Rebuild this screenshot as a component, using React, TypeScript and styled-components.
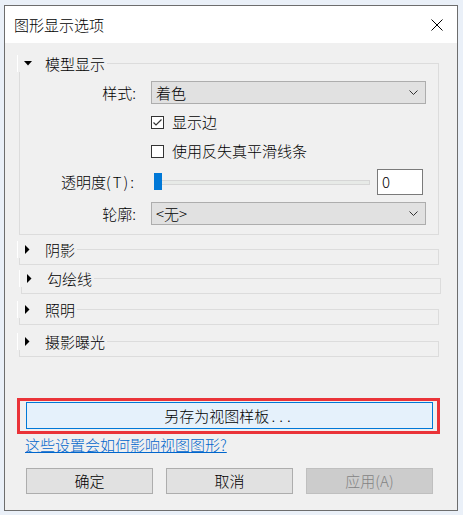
import React from "react";
import styled, { createGlobalStyle } from "styled-components";

const GlobalStyle = createGlobalStyle`
    html, body {
        margin: 0;
        padding: 0;
        background: #eaf0f8;
    }
    body {
        font-family: "Noto Sans CJK SC", "Liberation Sans", sans-serif;
        font-size: 15px;
        font-weight: 300;
        color: #000;
    }
    * {
        box-sizing: border-box;
    }
`;

const Dialog = styled.div`
    margin: 5px 0 0 4px;
    width: 454px;
    height: 506px;
    border: 1px solid #6d6d6d;
    background: #f0f0f0;
    display: flex;
    flex-direction: column;
`;

const TitleBar = styled.div`
    height: 37px;
    flex: none;
    background: #fff;
    display: flex;
    align-items: center;
    justify-content: space-between;
    padding: 0 14px 0 9px;
    font-size: 15px;
    line-height: 18px;
`;

const Content = styled.div`
    flex: 1;
    display: flex;
    flex-direction: column;
    padding: 12px 17px 0 12px;
`;

const Group = styled.fieldset<{ $gap?: number; $shift?: number }>`
    margin: ${(p) => p.$gap ?? 0}px ${(p) => 1 - (p.$shift ?? 0)}px 0
        ${(p) => 2 + (p.$shift ?? 0)}px;
    padding: 0;
    min-width: 0;
    border: 1px solid #dcdcdc;
`;

const Legend = styled.legend`
    margin-left: -3px;
    padding: 0 2px 0 5px;
    height: 17px;
    display: flex;
    align-items: center;
    border-left: 1px solid #fff;
    font-size: 15px;
    line-height: 17px;
`;

const Arrow = styled.span`
    width: 9px;
    display: flex;
    justify-content: center;
    margin-right: 13px;
`;

const GroupBody = styled.div<{ $open?: boolean }>`
    padding: ${(p) => (p.$open ? "9px 12px 9px 0" : "6px 0 0 0")};
`;

const Form = styled.div`
    display: grid;
    grid-template-columns: 116px 1fr;
    grid-template-rows: 23px 22px 22px 26px 23px;
    column-gap: 15px;
    row-gap: 7px;
    align-items: center;
`;

const Label = styled.span`
    text-align: right;
    font-size: 15px;
    line-height: 18px;
`;

const Wide = styled.span`
    letter-spacing: 2px;
`;

const Select = styled.div`
    height: 23px;
    border: 1px solid #adadad;
    background: #e1e1e1;
    display: flex;
    align-items: center;
    justify-content: space-between;
    padding: 0 7px 0 4px;
    font-size: 15px;
    line-height: 18px;
`;

const CheckRow = styled.label`
    grid-column: 2;
    display: flex;
    align-items: center;
    gap: 8px;
    font-size: 15px;
    line-height: 18px;
`;

const Box = styled.span`
    width: 13px;
    height: 13px;
    border: 1px solid #333;
    background: #fff;
    display: flex;
    align-items: center;
    justify-content: center;
`;

const SliderRow = styled.div`
    display: flex;
    align-items: center;
    gap: 7px;
    padding-right: 3px;
`;

const Slider = styled.div`
    position: relative;
    flex: 1;
    height: 26px;
    display: flex;
    align-items: center;
    padding-left: 3px;
`;

const Track = styled.div`
    flex: 1;
    height: 5px;
    border: 1px solid #d6d6d6;
    background: #e7eae7;
`;

const Thumb = styled.div`
    position: absolute;
    left: 3px;
    top: 4px;
    width: 8px;
    height: 17px;
    background: #0078d7;
`;

const NumberBox = styled.div`
    width: 46px;
    height: 26px;
    border: 1px solid #7a7a7a;
    background: #fff;
    padding: 2px 0 0 4px;
    font-size: 15px;
    line-height: 20px;
`;

const Highlight = styled.div`
    margin-top: 41px;
    height: 36px;
    border: 3px solid #ea3338;
    padding: 1px 4px 2px 6px;
`;

const SaveButton = styled.div`
    height: 27px;
    border: 1px solid #0078d7;
    background: #e5f1fb;
    display: flex;
    align-items: center;
    justify-content: center;
    font-size: 15px;
    line-height: 18px;
`;

const Dots = styled.span`
    letter-spacing: 4px;
    margin-left: 2px;
`;

const HelpLink = styled.a`
    margin: 2px 0 0 8px;
    height: 18px;
    color: #0066cc;
    text-decoration: underline;
    font-size: 15px;
    line-height: 18px;
    cursor: pointer;
`;

const Footer = styled.div`
    margin: 14px 7px 0 9px;
    display: flex;
    gap: 13px;
`;

const Button = styled.div<{ $disabled?: boolean }>`
    width: 127px;
    height: 26px;
    border: 1px solid ${(p) => (p.$disabled ? "#bfbfbf" : "#adadad")};
    background: ${(p) => (p.$disabled ? "#cccccc" : "#e1e1e1")};
    color: ${(p) => (p.$disabled ? "#838383" : "#000")};
    display: flex;
    align-items: center;
    justify-content: center;
    font-size: 15px;
    line-height: 18px;
`;

const CloseIcon = () => (
    <svg width="12" height="12" viewBox="0 0 12 12">
        <path d="M0.5 0.5 L11.5 11.5 M11.5 0.5 L0.5 11.5" stroke="#000" strokeWidth="1" />
    </svg>
);

const Chevron = () => (
    <svg width="9" height="5" viewBox="0 0 9 5">
        <path d="M0.5 0.5 L4.5 4.5 L8.5 0.5" stroke="#333" strokeWidth="1" fill="none" />
    </svg>
);

const Triangle = ({ open }: { open?: boolean }) =>
    open ? (
        <svg width="8" height="5" viewBox="0 0 8 5">
            <path d="M0 0 L8 0 L4 4.5 Z" fill="#000" />
        </svg>
    ) : (
        <svg width="5" height="9" viewBox="0 0 5 9">
            <path d="M0 0 L4.5 4.5 L0 9 Z" fill="#000" />
        </svg>
    );

const Tick = () => (
    <svg width="11" height="11" viewBox="0 0 11 11">
        <path d="M1.5 5.5 L4 8 L9.5 2.5" stroke="#333" strokeWidth="1.2" fill="none" />
    </svg>
);

const Section: React.FC<{
    title: string;
    open?: boolean;
    gap?: number;
    shift?: number;
    children?: React.ReactNode;
}> = ({ title, open, gap, shift, children }) => (
    <Group $gap={gap} $shift={shift}>
        <Legend>
            <Arrow>
                <Triangle open={open} />
            </Arrow>
            {title}
        </Legend>
        <GroupBody $open={open}>{children}</GroupBody>
    </Group>
);

export default function App() {
    return (
        <>
            <GlobalStyle />
            <Dialog>
                <TitleBar>
                    <span>图形显示选项</span>
                    <CloseIcon />
                </TitleBar>
                <Content>
                    <Section title="模型显示" open>
                        <Form>
                            <Label>样式:</Label>
                            <Select>
                                <span>着色</span>
                                <Chevron />
                            </Select>
                            <CheckRow>
                                <Box>
                                    <Tick />
                                </Box>
                                显示边
                            </CheckRow>
                            <CheckRow>
                                <Box />
                                使用反失真平滑线条
                            </CheckRow>
                            <Label>
                                透明度<Wide>(T):</Wide>
                            </Label>
                            <SliderRow>
                                <Slider>
                                    <Track />
                                    <Thumb />
                                </Slider>
                                <NumberBox>0</NumberBox>
                            </SliderRow>
                            <Label>轮廓:</Label>
                            <Select>
                                <span>&lt;无&gt;</span>
                                <Chevron />
                            </Select>
                        </Form>
                    </Section>
                    <Section title="阴影" gap={6} />
                    <Section title="勾绘线" gap={5} shift={2} />
                    <Section title="照明" gap={7} />
                    <Section title="摄影曝光" gap={8} />
                    <Highlight>
                        <SaveButton>
                            另存为视图样板<Dots>...</Dots>
                        </SaveButton>
                    </Highlight>
                    <HelpLink>这些设置会如何影响视图图形?</HelpLink>
                    <Footer>
                        <Button>确定</Button>
                        <Button>取消</Button>
                        <Button $disabled>应用(A)</Button>
                    </Footer>
                </Content>
            </Dialog>
        </>
    );
}
